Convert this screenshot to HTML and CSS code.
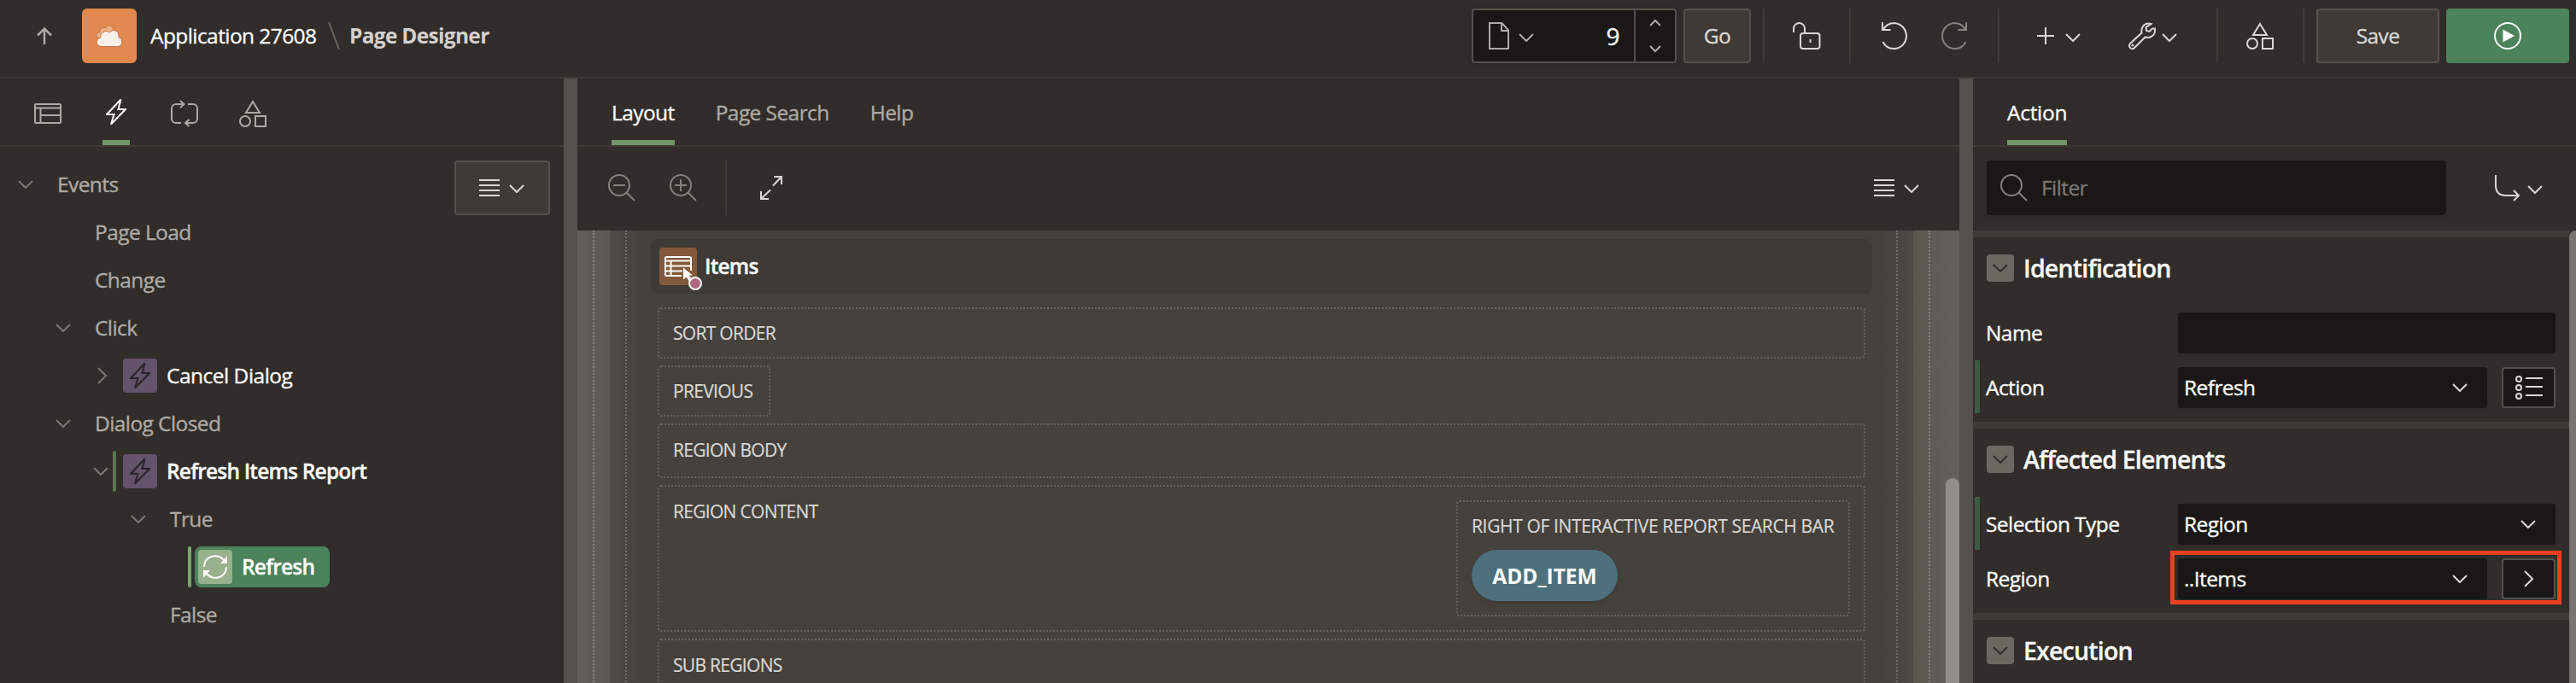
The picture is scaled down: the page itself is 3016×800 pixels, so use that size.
FILE: index.html
```html
<!DOCTYPE html>
<html lang="en">
<head>
<meta charset="utf-8">
<title>Page Designer</title>
<link rel="stylesheet" href="styles.css">
</head>
<body>
<svg class="defs" aria-hidden="true">
  <symbol id="down" viewBox="0 0 18 10"><path d="M1 1l8 8 8-8"/></symbol>
  <symbol id="right" viewBox="0 0 12 20"><path d="M1 1l9 9-9 9"/></symbol>
  <symbol id="lines" viewBox="0 0 24 20"><path d="M0 1h24M0 7h24M0 13h24M0 19h24"/></symbol>
  <symbol id="bolt" viewBox="0 0 24 32"><path d="M17.5 1.5L1 19h8.5L6 30.500 23 13h-8.500z"/></symbol>
  <symbol id="shapes" viewBox="0 0 32 32"><path d="M16 2l8 13H8z"/><ellipse cx="7" cy="25" rx="6" ry="6"/><path d="M19 19h12v12H19z"/></symbol>
  <symbol id="search" viewBox="0 0 32 32"><circle cx="13" cy="13" r="12"/><path d="M21.500 21.500L31 31"/></symbol>
</svg>

<header class="header">
  <svg class="ic up" width="18" height="20" viewBox="0 0 18 20"><path d="M9 20V2M1 9.500l8-8 8 8"/></svg>
  <div class="logo">
    <svg width="32" height="26" viewBox="0 0 32 26">
      <path class="cloud-back" d="M4 16C-1 15 0 8 5 8.500 5 4 9 2.500 11.500 4 13-.5 20 0 20.500 5.500L22 14 6 18z"/>
      <path class="cloud-front" d="M7 25.500c-7 0-8-8.500-1.500-10.500C5 8.500 13 5.500 16.500 9c3-4.500 10.500-2.500 10.500 4 0 .5 0 1-.2 1.500 6 2 5.200 11-1.300 11z"/>
    </svg>
  </div>
  <span class="t app">Application 27608</span>
  <svg class="slash" width="14" height="32" viewBox="0 0 14 32"><path d="M1 0l12 32"/></svg>
  <span class="t crumb">Page Designer</span>
  <div class="tools">
    <div class="pagebox">
      <svg class="ic dim" width="24" height="32" viewBox="0 0 24 32"><path d="M1 1h14.500L23 9.500V31H1zM15 1v9h8"/></svg>
      <svg class="ic dim pc" width="18" height="10"><use href="#down"/></svg>
      <span class="t num">9</span>
      <span class="spin">
        <svg class="ic dim" width="14" height="8" viewBox="0 0 14 8"><path d="M1 7l6-6 6 6"/></svg>
        <svg class="ic dim" width="14" height="8" viewBox="0 0 14 8"><path d="M1 1l6 6 6-6"/></svg>
      </span>
    </div>
    <div class="btn go t">Go</div>
    <i class="vr v1"></i>
    <svg class="ic lock" width="32" height="32" viewBox="0 0 32 32"><path d="M1 12V7.500a6.500 6.500 0 0 1 13 0V12"/><rect x="9" y="13" width="22.500" height="18" rx="3"/><path d="M20.500 20v4"/></svg>
    <i class="vr v2"></i>
    <svg class="ic undo" width="30" height="32" viewBox="0 0 30 32"><path d="M1 0v9h9.500M1.500 9C5 3 10 1 15 1c9 1 14 8 14 15s-5 15-15 15C8 31 4 28 1.500 23"/></svg>
    <svg class="ic redo" width="30" height="32" viewBox="0 0 30 32"><path d="M29 0v9h-9.500M28.500 9C25 3 20 1 15 1 6 2 1 9 1 16s5 15 15 15c6 0 10-3 12.500-8"/></svg>
    <i class="vr v3"></i>
    <svg class="ic plus" width="20" height="20" viewBox="0 0 20 20"><path d="M10 0v20M0 10h20"/></svg>
    <svg class="ic pd" width="18" height="10"><use href="#down"/></svg>
    <svg class="ic wrench" width="32" height="32" viewBox="0 0 32 32"><path d="M26.500 2C20 0 14.500 4.500 15.500 12.500L2 25c-3 4 2 8 5 5l12.500-12.500C26 19.500 32 15 31 7.500h-3L24.500 11 21 10l-.5-4z"/><circle cx="5" cy="27" r=".6"/></svg>
    <svg class="ic wd" width="18" height="10"><use href="#down"/></svg>
    <i class="vr v4"></i>
    <svg class="ic shp" width="32" height="32"><use href="#shapes"/></svg>
    <i class="vr v5"></i>
    <div class="btn save t">Save</div>
    <div class="run"><svg width="32" height="32" viewBox="0 0 32 32"><circle cx="16" cy="16" r="15"/><path d="M10.500 8.500L24 16l-13.500 7.500z"/></svg></div>
  </div>
</header>

<main class="main">
  <section class="left">
    <nav class="tabs ltabs">
      <span class="ltab"><svg class="ic dim" width="32" height="24" viewBox="0 0 32 24"><rect x="1" y="1" width="30" height="22" rx="1"/><path d="M1 5.500h30M7.500 6v17M8 14h23"/></svg></span>
      <span class="ltab on"><svg class="ic" width="24" height="32"><use href="#bolt"/></svg></span>
      <span class="ltab"><svg class="ic dim" width="32" height="32" viewBox="0 0 32 32"><path d="M15 5H6a5 5 0 0 0-5 5v12a5 5 0 0 0 5 5h6M20 5h6a5 5 0 0 1 5 5v12a5 5 0 0 1-5 5h-9M11 1l4.500 4-4.500 4M21.500 23L17 27l4.500 4"/></svg></span>
      <span class="ltab"><svg class="ic dim" width="32" height="32"><use href="#shapes"/></svg></span>
    </nav>
    <div class="lbody">
      <div class="tree">
        <div class="row r0"><svg class="ic ar" width="18" height="10"><use href="#down"/></svg><span class="t ev">Events</span></div>
        <div class="row r1"><i class="ar"></i><span class="t">Page Load</span></div>
        <div class="row r1"><i class="ar"></i><span class="t">Change</span></div>
        <div class="row r1"><svg class="ic ar" width="18" height="10"><use href="#down"/></svg><span class="t">Click</span></div>
        <div class="row r2"><svg class="ic ar ra" width="12" height="20"><use href="#right"/></svg><span class="mark off"></span><span class="chip"><svg class="ic" width="24" height="32"><use href="#bolt"/></svg></span><span class="t hi">Cancel Dialog</span></div>
        <div class="row r1"><svg class="ic ar" width="18" height="10"><use href="#down"/></svg><span class="t">Dialog Closed</span></div>
        <div class="row r2"><svg class="ic ar" width="18" height="10"><use href="#down"/></svg><span class="mark"></span><span class="chip"><svg class="ic" width="24" height="32"><use href="#bolt"/></svg></span><span class="t hb">Refresh Items Report</span></div>
        <div class="row r3"><svg class="ic ar" width="18" height="10"><use href="#down"/></svg><span class="t">True</span></div>
        <div class="row r4"><span class="mark lit"></span><div class="sel"><span class="chip green"><svg width="28" height="28" viewBox="0 0 28 28"><path d="M1 14C1 4 10 0 17 1.500c4 1 6 3 8.500 6M27 14c0 10-9 14-16 12.500-4-1-6-3-8.500-6"/><path class="fill" d="M28 1v9h-8zM0 27v-9h8z"/></svg></span><span class="t hb">Refresh</span></div></div>
        <div class="row r3"><i class="ar"></i><span class="t">False</span></div>
      </div>
      <div class="btn menu"><svg class="ic" width="24" height="20"><use href="#lines"/></svg><svg class="ic" width="18" height="10"><use href="#down"/></svg></div>
    </div>
  </section>
  <i class="split"></i>
  <section class="center">
    <nav class="tabs ctabs"><span class="t tab on">Layout</span><span class="t tab ps">Page Search</span><span class="t tab">Help</span></nav>
    <div class="bar">
      <svg class="ic zm" width="32" height="32" viewBox="0 0 32 32"><use href="#search"/><path d="M6 13h14"/></svg>
      <svg class="ic zm" width="32" height="32" viewBox="0 0 32 32"><use href="#search"/><path d="M6 13h14M13 6v14"/></svg>
      <i class="vr"></i>
      <svg class="ic ex" width="26" height="28" viewBox="0 0 26 28"><path d="M15 11.500L24.500 1.500M16 1h9v9M12 16.500L1.500 26.500M1 18v9h9"/></svg>
      <div class="barmenu"><svg class="ic" width="24" height="20"><use href="#lines"/></svg><svg class="ic" width="18" height="10"><use href="#down"/></svg></div>
    </div>
    <div class="canvas">
      <div class="w1"><div class="w2"><div class="w3"><div class="w4">
        <div class="ihead">
          <span class="iicon">
            <svg width="32" height="24" viewBox="0 0 32 24"><path d="M20 23H2.500Q1 23 1 21.500v-19Q1 1 2.500 1h27Q31 1 31 2.500V17M1 5.500h30M1 11.500h30M1 17.500h20M7.500 6v17"/></svg>
            <svg class="cursor" width="24" height="28" viewBox="0 0 24 28"><path d="M1 1.500v14l3.500-3 3.500 5 3-2-3-5h4z"/><circle cx="15" cy="20" r="7"/></svg>
          </span>
          <span class="t hb">Items</span>
        </div>
        <div class="slot s60"><span class="u">SORT ORDER</span></div>
        <div class="slot s60 prev"><span class="u">PREVIOUS</span></div>
        <div class="slot s64"><span class="u">REGION BODY</span></div>
        <div class="slot content"><span class="u">REGION CONTENT</span>
          <div class="slot rir"><span class="u wide">RIGHT OF INTERACTIVE REPORT SEARCH BAR</span><span class="pill">ADD_ITEM</span></div>
        </div>
        <div class="slot s64"><span class="u">SUB REGIONS</span></div>
      </div></div></div></div>
      <div class="gutter"><i class="thumb"></i></div>
    </div>
  </section>
  <i class="split"></i>
  <section class="right">
    <nav class="tabs rtabs"><span class="t tab on">Action</span></nav>
    <div class="filter">
      <div class="fbox"><svg class="ic" width="32" height="32"><use href="#search"/></svg><span class="t">Filter</span></div>
      <svg class="ic goto" width="30" height="30" viewBox="0 0 30 30"><path d="M1 0v12q0 12 12 12h15M22 18l6 6-6 6"/></svg>
      <svg class="ic" width="18" height="10"><use href="#down"/></svg>
    </div>
    <div class="props">
      <div class="groups">
        <div class="group">
          <h2><span class="tog"><svg class="ic" width="18" height="10"><use href="#down"/></svg></span><span class="ttl">Identification</span></h2>
          <div class="prop"><label class="t">Name</label><span class="field"></span></div>
          <div class="prop changed"><label class="t">Action</label><span class="field"><span class="t">Refresh</span><svg class="ic" width="18" height="10"><use href="#down"/></svg></span>
            <span class="pbtn"><svg class="ic" width="32" height="28" viewBox="0 0 32 28"><circle cx="4" cy="4" r="3"/><circle cx="4" cy="14" r="3"/><circle cx="4" cy="24" r="3"/><path d="M12 3h20M12 13h20M12 23h20"/></svg></span></div>
        </div>
        <div class="group">
          <h2><span class="tog"><svg class="ic" width="18" height="10"><use href="#down"/></svg></span><span class="ttl">Affected Elements</span></h2>
          <div class="prop changed"><label class="t st">Selection Type</label><span class="field"><span class="t">Region</span><svg class="ic" width="18" height="10"><use href="#down"/></svg></span></div>
          <div class="prop marked"><label class="t">Region</label><span class="field"><span class="t">..Items</span><svg class="ic" width="18" height="10"><use href="#down"/></svg></span>
            <span class="pbtn"><svg class="ic" width="12" height="20"><use href="#right"/></svg></span><i class="red"></i></div>
        </div>
        <div class="group">
          <h2><span class="tog"><svg class="ic" width="18" height="10"><use href="#down"/></svg></span><span class="ttl">Execution</span></h2>
        </div>
      </div>
      <i class="pthumb"></i>
    </div>
  </section>
</main>
</body>
</html>
```
FILE: styles.css
```css
* { box-sizing: border-box; }
body { margin: 0; width: 3016px; height: 800px; overflow: hidden; background: #312d2a; color: #fcfbfa; font-family: "Open Sans", "Noto Sans", sans-serif; display: flex; flex-direction: column; }
svg { display: block; flex: none; overflow: visible; }
.defs { position: absolute; width: 0; height: 0; }
.ic { fill: none; stroke: #dad8d5; stroke-width: 2; }
.dim { stroke: #aeaaa6; }
.t { font-size: 24.5px; line-height: 32px; letter-spacing: -.58px; white-space: nowrap; font-weight: 500; -webkit-text-stroke: .35px currentColor; }
.vr { flex: none; width: 2px; height: 64px; background: #413d39; }
.btn { flex: none; height: 64px; border: 2px solid #55504b; border-radius: 4px; background: #3e3a36; color: #dad8d5; display: flex; align-items: center; justify-content: center; }

.header { flex: none; height: 92px; border-bottom: 2px solid #3e3a36; display: flex; align-items: center; padding: 0 8px 6px 43px; }
.up { stroke: #aeaaa6; stroke-width: 2.500; }
.logo { margin-left: 35px; width: 64px; height: 64px; border-radius: 6px; background: #e2894f; display: flex; align-items: center; justify-content: center; }
.cloud-back { fill: #ebb28c; stroke: #c3733f; }
.cloud-front { fill: #faefe9; stroke: #c3733f; }
.app { margin-left: 16px; width: 208px; }
.slash { stroke: #6c6761; stroke-width: 2; }
.crumb { margin-left: 11px; font-weight: 700; letter-spacing: -.700px; color: #d4d1ce; -webkit-text-stroke: 0; }
.tools { margin-left: auto; display: flex; align-items: center; }
.pagebox { width: 240px; height: 64px; border: 2px solid #55504b; border-radius: 4px; background: #191816; display: flex; align-items: center; padding-left: 18px; box-shadow: 0 2px 4px #2228; }
.pc { margin: 4px 0 0 11px; }
.num { flex: 1; text-align: right; padding-right: 17px; font-size: 28px; }
.spin { width: 48px; height: 60px; border-left: 2px solid #55504b; display: flex; flex-direction: column; align-items: center; justify-content: space-between; padding: 11px 0 11px; }
.go { width: 79px; margin-left: 8px; }
.v1 { margin-left: 14px; }
.lock { margin-left: 33px; }
.v2 { margin-left: 34px; }
.undo { margin-left: 36px; }
.redo { margin-left: 40px; stroke: #85817d; }
.v3 { margin-left: 36px; }
.plus { margin-left: 44px; }
.pd { margin: 4px 0 0 13px; }
.wrench { margin-left: 56px; }
.wd { margin: 4px 0 0 7px; }
.v4 { margin-left: 46px; }
.shp { margin-left: 33px; }
.v5 { margin-left: 34px; }
.save { width: 144px; margin-left: 14px; }
.run { width: 144px; height: 64px; margin-left: 8px; border-radius: 4px; background: #4c825c; display: flex; align-items: center; justify-content: center; }
.run circle { fill: none; stroke: #fcfbfa; stroke-width: 2; }
.run path { fill: #fcfbfa; }

.main { flex: 1; min-height: 0; display: flex; }
.split { flex: none; width: 16px; background: #55504b; }
.tabs { height: 80px; border-bottom: 2px solid #3e3a36; display: flex; }
.tab { padding-top: 24px; color: #aeaaa6; }
.tab.on { color: #fcfbfa; border-bottom: 6px solid #759469; }

.left { width: 660px; flex: none; }
.ltabs { padding-left: 40px; gap: 48px; }
.ltab { width: 32px; display: flex; align-items: center; justify-content: center; border-top: 3px solid transparent; }
.ltab.on { border-top-width: 6px; border-bottom: 6px solid #759469; }
.ltab.on .ic { stroke: #fcfbfa; }
.lbody { display: flex; }
.tree { flex: 1; padding-top: 16px; }
.row { height: 56px; display: flex; align-items: center; color: #aeaaa6; }
.row .ar { flex: none; width: 18px; stroke: #7d7873; }
.row .t { margin-left: 28px; }
.row .ev { margin-left: 28px; }
.r0 { padding-left: 21px; }
.r1 { padding-left: 65px; }
.r2 { padding-left: 109px; }
.r3 { padding-left: 153px; }
.r4 { padding-left: 220px; }
.row .ra { width: 12px; margin: 0 1px 0 5px; }
.mark { width: 4px; height: 48px; border-radius: 2px; background: #5a7351; margin: 0 8px 0 5px; }
.mark.off { background: transparent; }
.mark.lit { background: #81a274; margin: 0 4px 0 0; }
.chip { flex: none; width: 40px; height: 40px; border-radius: 4px; background: #65526b; display: flex; align-items: center; justify-content: center; }
.chip .ic { stroke: #29232b; }
.row .hi, .row .hb { margin-left: 11px; color: #fcfbfa; }
.hb { font-weight: 600; letter-spacing: -.810px; }
.hi { letter-spacing: -.500px; }
.sel { width: 158px; height: 48px; border-radius: 8px; background: #4c825c; display: flex; align-items: center; padding-left: 4px; }
.green { background: #98b08c; }
.green path { fill: none; stroke: #fcfbfa; stroke-width: 2; }
.green .fill { fill: #fcfbfa; stroke: none; }
.menu { width: 112px; margin: 16px 16px 0 0; padding-right: 2px; gap: 11px; }
.menu svg + svg, .barmenu svg + svg { margin-top: 2px; }

.center { width: 1618px; flex: none; display: flex; flex-direction: column; }
.ctabs { padding-left: 40px; gap: 48px; flex: none; }
.bar { flex: none; height: 98px; display: flex; align-items: center; padding: 0 47px 2px 36px; }
.zm { stroke: #85817d; margin-right: 40px; }
.bar .vr { margin: 0 39px 0 -7px; }
.barmenu { margin-left: auto; display: flex; align-items: center; gap: 11px; }
.canvas { flex: 1; min-height: 0; overflow: hidden; display: flex; padding-left: 18px; background: linear-gradient(90deg, #65605b 0, #5c5651 38px, #5c5651 1564px, #65605b 1618px); }
.w1, .w3 { border: dotted #85817d; border-width: 0 2px; padding: 0 18px; height: 700px; }
.w1 { width: 1566px; flex: none; }
.w2 { background: linear-gradient(90deg, #504945, #45413c 38px, #45413c 1488px, #504945); padding: 0 18px; height: 700px; }
.w3 { border-color: #716c67; }
.w4 { background: #45423d; height: 700px; padding: 10px 10px 0; border-radius: 8px 8px 0 0; }
.ihead { height: 64px; border-radius: 8px; background: #3e3a36; display: flex; align-items: center; padding-left: 10px; margin-bottom: 16px; }
.ihead .hb { margin-left: 9px; }
.iicon { position: relative; width: 44px; height: 44px; border-radius: 4px; background: #83593b; display: flex; align-items: center; justify-content: center; }
.iicon svg { fill: none; stroke: #fcfbfa; stroke-width: 2; }
.iicon .cursor { position: absolute; left: 27px; top: 22px; }
.cursor path { fill: #fcfbfa; stroke: #83593b; stroke-width: 1; paint-order: stroke; }
.cursor circle { fill: #ae6a7c; stroke-width: 2; }
.slot { border: 2px dotted #67625d; border-radius: 4px; margin: 0 8px 8px; display: flex; align-items: center; padding: 0 16px; }
.s60 { height: 60px; }
.s64 { height: 64px; padding-bottom: 2px; }
.prev { width: 132px; }
.u { font-size: 21px; line-height: 30px; font-weight: 500; letter-spacing: -.700px; color: #dad8d5; white-space: nowrap; -webkit-text-stroke: .2px currentColor; }
.wide { letter-spacing: -.350px; }
.content { height: 172px; align-items: flex-start; justify-content: space-between; padding: 14px 16px 0; }
.rir { width: 461px; height: 136px; margin: 2px 0 0; flex-direction: column; align-items: flex-start; padding: 13px 16px 0; }
.pill { width: 171px; height: 60px; margin-top: 13px; border-radius: 30px; background: #4d707c; color: #fcfbfa; display: flex; align-items: center; justify-content: center; font-size: 24.500px; font-weight: 700; box-shadow: 0 2px 4px #0002; }
.gutter { flex: 1; display: flex; justify-content: flex-end; padding-top: 290px; }
.thumb { width: 16px; background: #928d89; border-radius: 8px 8px 0 0; }

.right { width: 706px; flex: none; display: flex; flex-direction: column; }
.rtabs { padding-left: 40px; flex: none; }
.rtabs .tab { letter-spacing: -.300px; }
.filter { flex: none; height: 98px; display: flex; align-items: center; padding: 0 0 2px 16px; }
.fbox { width: 538px; height: 64px; border-radius: 4px; background: #191816; display: flex; align-items: center; padding-left: 16px; gap: 16px; color: #7d7873; margin-right: 57px; box-shadow: 0 2px 4px #2224; }
.fbox .ic { stroke: #85817d; }
.goto + .ic { margin: 4px 0 0 8px; }
.props { flex: 1; min-height: 0; display: flex; }
.groups { width: 698px; flex: none; }
.pthumb { width: 8px; background: #7a7470; border-radius: 8px 0 0 0; }
.group { border-top: 8px solid #3e3a36; padding-bottom: 8px; }
h2 { margin: 0; height: 80px; padding: 0 0 8px 16px; display: flex; align-items: center; gap: 11px; }
.tog { width: 32px; height: 32px; border-radius: 4px; background: #6c6761; display: flex; align-items: center; justify-content: center; }
.tog .ic { stroke: #312d2a; }
.ttl { font-size: 28.500px; line-height: 36px; font-weight: 600; letter-spacing: -.800px; -webkit-text-stroke: .3px currentColor; }
.prop { position: relative; height: 64px; padding: 0 16px 0 12px; display: flex; align-items: center; }
.prop label { width: 225px; margin-left: 3px; }
.field { flex: 1; height: 48px; border-radius: 4px; background: #191816; display: flex; align-items: center; justify-content: space-between; padding: 0 23px 0 7px; box-shadow: 0 2px 3px #2224; }
.pbtn { width: 63px; height: 48px; margin-left: 17px; border: 2px solid #55504b; border-radius: 4px; background: #191816; display: flex; align-items: center; justify-content: center; }
.changed { background: linear-gradient(#3d5a44, #3d5a44) 2px 0 / 6px 62px no-repeat; }
.red { position: absolute; left: 231px; right: 9px; top: -1px; height: 63px; border: 5px solid #ec4023; }
```
